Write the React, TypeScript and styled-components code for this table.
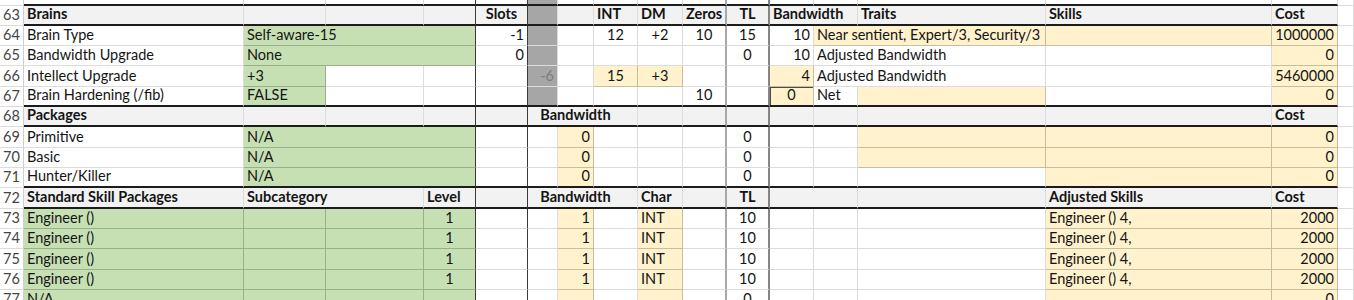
import React from "react";
import styled, { createGlobalStyle, css } from "styled-components";

const GlobalStyle = createGlobalStyle`
  html, body { margin: 0; padding: 0; background: #ffffff; }
  body { font-family: Lato, "Liberation Sans", sans-serif; }
`;

const COLS = [24, 220, 82, 98, 52, 52, 30, 36, 44, 45, 44, 43, 44, 44, 188, 226, 66, 16];
const LAST = COLS.length - 1; // 17
const GRID = "#dcdcdc";
const COLORED_LINE = "rgba(0,0,0,0.22)";

type Fill = "g" | "y" | "x" | "h" | "w";
type Align = "l" | "c" | "r";

const FILLS: Record<Fill, string> = {
  g: "#c6e0b4",
  y: "#fff2cc",
  x: "#a6a6a6",
  h: "#f2f2f2",
  w: "#ffffff",
};

const rightRule = (col: number, colored: boolean) => {
  if (col === 4 || col === 5) return "1px solid #3a3a3a";
  if (col === 10) return "2px solid #a8a8a8";
  if (col === 11) return "2px solid #858585";
  if (col === 0) return "1px solid #cfcfcf";
  return `1px solid ${colored ? COLORED_LINE : GRID}`;
};

const Sheet = styled.div`
  display: grid;
  grid-template-columns: ${COLS.map((w) => `${w}px`).join(" ")};
  grid-template-rows: 5.5px repeat(15, 20.33px);
  width: 1354px;
  height: 300px;
  overflow: hidden;
  font-size: 14.5px;
  color: #141414;
`;

const Cell = styled.div<{
  $span: number;
  $fill: Fill;
  $align: Align;
  $bold: boolean;
  $muted: boolean;
  $right: string;
  $bottom: string;
  $boxed: boolean;
  $padRight: number;
}>`
  grid-column: span ${(p) => p.$span};
  box-sizing: border-box;
  display: flex;
  align-items: flex-end;
  justify-content: ${(p) => (p.$align === "l" ? "flex-start" : p.$align === "c" ? "center" : "flex-end")};
  padding: 0 ${(p) => 3 + p.$padRight}px 1px 3px;
  background: ${(p) => FILLS[p.$fill]};
  border-right: ${(p) => p.$right};
  border-bottom: ${(p) => p.$bottom};
  font-weight: ${(p) => (p.$bold ? 700 : 400)};
  color: ${(p) => (p.$muted ? "#7d7d7d" : "#141414")};
  white-space: nowrap;
  overflow: hidden;
  line-height: 18px;
  ${(p) =>
    p.$boxed &&
    css`
      box-shadow: inset 1px 1px 0 #4a4a4a;
    `}
`;

const RowNum = styled.div<{ $bottom: string }>`
  box-sizing: border-box;
  display: flex;
  align-items: flex-end;
  justify-content: center;
  padding-bottom: 1px;
  line-height: 18px;
  color: #444444;
  background: #ffffff;
  border-right: 1px solid #cfcfcf;
  border-bottom: ${(p) => p.$bottom};
  overflow: hidden;
`;

type C = {
  c: number;
  span?: number;
  t?: string;
  bg?: Fill;
  al?: Align;
  muted?: boolean;
  boxed?: boolean;
  pr?: number;
};

type Row = {
  n: string;
  head?: boolean;
  ruleBelow?: boolean;
  gray?: boolean;
  cells: C[];
};

const ROWS: Row[] = [
  { n: "", ruleBelow: true, gray: true, cells: [] },
  {
    n: "63",
    head: true,
    gray: true,
    cells: [
      { c: 1, t: "Brains" },
      { c: 5, t: "Slots", al: "c" },
      { c: 8, t: "INT" },
      { c: 9, t: "DM" },
      { c: 10, t: "Zeros" },
      { c: 11, t: "TL", al: "c" },
      { c: 12, span: 2, t: "Bandwidth" },
      { c: 14, t: "Traits" },
      { c: 15, t: "Skills" },
      { c: 16, t: "Cost" },
    ],
  },
  {
    n: "64",
    gray: true,
    cells: [
      { c: 1, t: "Brain Type" },
      { c: 2, span: 3, t: "Self-aware-15", bg: "g" },
      { c: 5, t: "-1", al: "r" },
      { c: 8, t: "12", al: "c" },
      { c: 9, t: "+2", al: "c" },
      { c: 10, t: "10", al: "c" },
      { c: 11, t: "15", al: "c" },
      { c: 12, t: "10", al: "r" },
      { c: 13, span: 2, t: "Near sentient, Expert/3, Security/3", bg: "y" },
      { c: 15, bg: "y" },
      { c: 16, t: "1000000", al: "r", bg: "y" },
    ],
  },
  {
    n: "65",
    gray: true,
    cells: [
      { c: 1, t: "Bandwidth Upgrade" },
      { c: 2, span: 3, t: "None", bg: "g" },
      { c: 5, t: "0", al: "r" },
      { c: 11, t: "0", al: "c" },
      { c: 12, t: "10", al: "r" },
      { c: 13, span: 2, t: "Adjusted Bandwidth" },
      { c: 16, t: "0", al: "r", bg: "y" },
    ],
  },
  {
    n: "66",
    gray: true,
    cells: [
      { c: 1, t: "Intellect Upgrade" },
      { c: 2, t: "+3", bg: "g" },
      { c: 6, t: "-6", al: "r", bg: "x", muted: true },
      { c: 8, t: "15", al: "c", bg: "y" },
      { c: 9, t: "+3", al: "c", bg: "y" },
      { c: 12, t: "4", al: "r", bg: "y" },
      { c: 13, span: 2, t: "Adjusted Bandwidth" },
      { c: 16, t: "5460000", al: "r", bg: "y" },
    ],
  },
  {
    n: "67",
    gray: true,
    ruleBelow: true,
    cells: [
      { c: 1, t: "Brain Hardening (/fib)" },
      { c: 2, t: "FALSE", bg: "g" },
      { c: 10, t: "10", al: "c" },
      { c: 12, t: "0", al: "c", bg: "y", boxed: true },
      { c: 13, t: "Net" },
      { c: 14, bg: "y" },
      { c: 16, t: "0", al: "r", bg: "y" },
    ],
  },
  {
    n: "68",
    head: true,
    cells: [
      { c: 1, t: "Packages" },
      { c: 6, span: 3, t: "Bandwidth", al: "c", pr: 14 },
      { c: 16, t: "Cost" },
    ],
  },
  {
    n: "69",
    cells: [
      { c: 1, t: "Primitive" },
      { c: 2, span: 3, t: "N/A", bg: "g" },
      { c: 7, t: "0", al: "r", bg: "y" },
      { c: 11, t: "0", al: "c" },
      { c: 14, bg: "y" },
      { c: 15, bg: "y" },
      { c: 16, t: "0", al: "r", bg: "y" },
    ],
  },
  {
    n: "70",
    cells: [
      { c: 1, t: "Basic" },
      { c: 2, span: 3, t: "N/A", bg: "g" },
      { c: 7, t: "0", al: "r", bg: "y" },
      { c: 11, t: "0", al: "c" },
      { c: 14, bg: "y" },
      { c: 15, bg: "y" },
      { c: 16, t: "0", al: "r", bg: "y" },
    ],
  },
  {
    n: "71",
    ruleBelow: true,
    cells: [
      { c: 1, t: "Hunter/Killer" },
      { c: 2, span: 3, t: "N/A", bg: "g" },
      { c: 7, t: "0", al: "r", bg: "y" },
      { c: 11, t: "0", al: "c" },
      { c: 15, bg: "y" },
      { c: 16, t: "0", al: "r", bg: "y" },
    ],
  },
  {
    n: "72",
    head: true,
    cells: [
      { c: 1, t: "Standard Skill Packages" },
      { c: 2, span: 2, t: "Subcategory" },
      { c: 4, t: "Level" },
      { c: 6, span: 3, t: "Bandwidth", al: "c", pr: 14 },
      { c: 9, t: "Char" },
      { c: 11, t: "TL", al: "c" },
      { c: 12, span: 2 },
      { c: 15, t: "Adjusted Skills" },
      { c: 16, t: "Cost" },
    ],
  },
  ...["73", "74", "75", "76"].map(
    (n): Row => ({
      n,
      cells: [
        { c: 1, t: "Engineer ()", bg: "g" },
        { c: 2, bg: "g" },
        { c: 3, bg: "g" },
        { c: 4, t: "1", al: "c", bg: "g" },
        { c: 7, t: "1", al: "r", bg: "y" },
        { c: 9, t: "INT", bg: "y" },
        { c: 11, t: "10", al: "c" },
        { c: 15, t: "Engineer () 4,", bg: "y" },
        { c: 16, t: "2000", al: "r", bg: "y" },
      ],
    })
  ),
  {
    n: "77",
    cells: [
      { c: 1, t: "N/A", bg: "g" },
      { c: 2, bg: "g" },
      { c: 3, bg: "g" },
      { c: 4, bg: "g" },
      { c: 7, bg: "y" },
      { c: 9, bg: "y" },
      { c: 11, t: "0", al: "c" },
      { c: 15, bg: "y" },
      { c: 16, t: "0", al: "r", bg: "y" },
    ],
  },
];

function renderRow(row: Row, ri: number) {
  const out: React.ReactNode[] = [];
  const ruled = row.head || row.ruleBelow;
  out.push(
    <RowNum key={`${ri}-n`} $bottom={`1px solid ${GRID}`}>
      {row.n}
    </RowNum>
  );
  let col = 1;
  while (col <= LAST) {
    const def = row.cells.find((x) => x.c === col);
    const span = def?.span ?? 1;
    const end = col + span - 1;
    let fill: Fill = def?.bg ?? "w";
    if (!def?.bg) {
      if (row.gray && col === 6) fill = "x";
      else if (row.head && col <= 16) fill = "h";
    }
    const colored = fill === "g" || fill === "y";
    const bottom =
      ruled && col <= 16
        ? "2px solid #1c1c1c"
        : `1px solid ${colored ? COLORED_LINE : GRID}`;
    out.push(
      <Cell
        key={`${ri}-${col}`}
        $span={span}
        $fill={fill}
        $align={def?.al ?? "l"}
        $bold={!!row.head}
        $muted={!!def?.muted}
        $right={rightRule(end, colored)}
        $bottom={bottom}
        $boxed={!!def?.boxed}
        $padRight={def?.pr ?? 0}
      >
        {def?.t ?? ""}
      </Cell>
    );
    col = end + 1;
  }
  return out;
}

export default function App() {
  return (
    <>
      <GlobalStyle />
      <Sheet>{ROWS.map((r, i) => renderRow(r, i))}</Sheet>
    </>
  );
}
